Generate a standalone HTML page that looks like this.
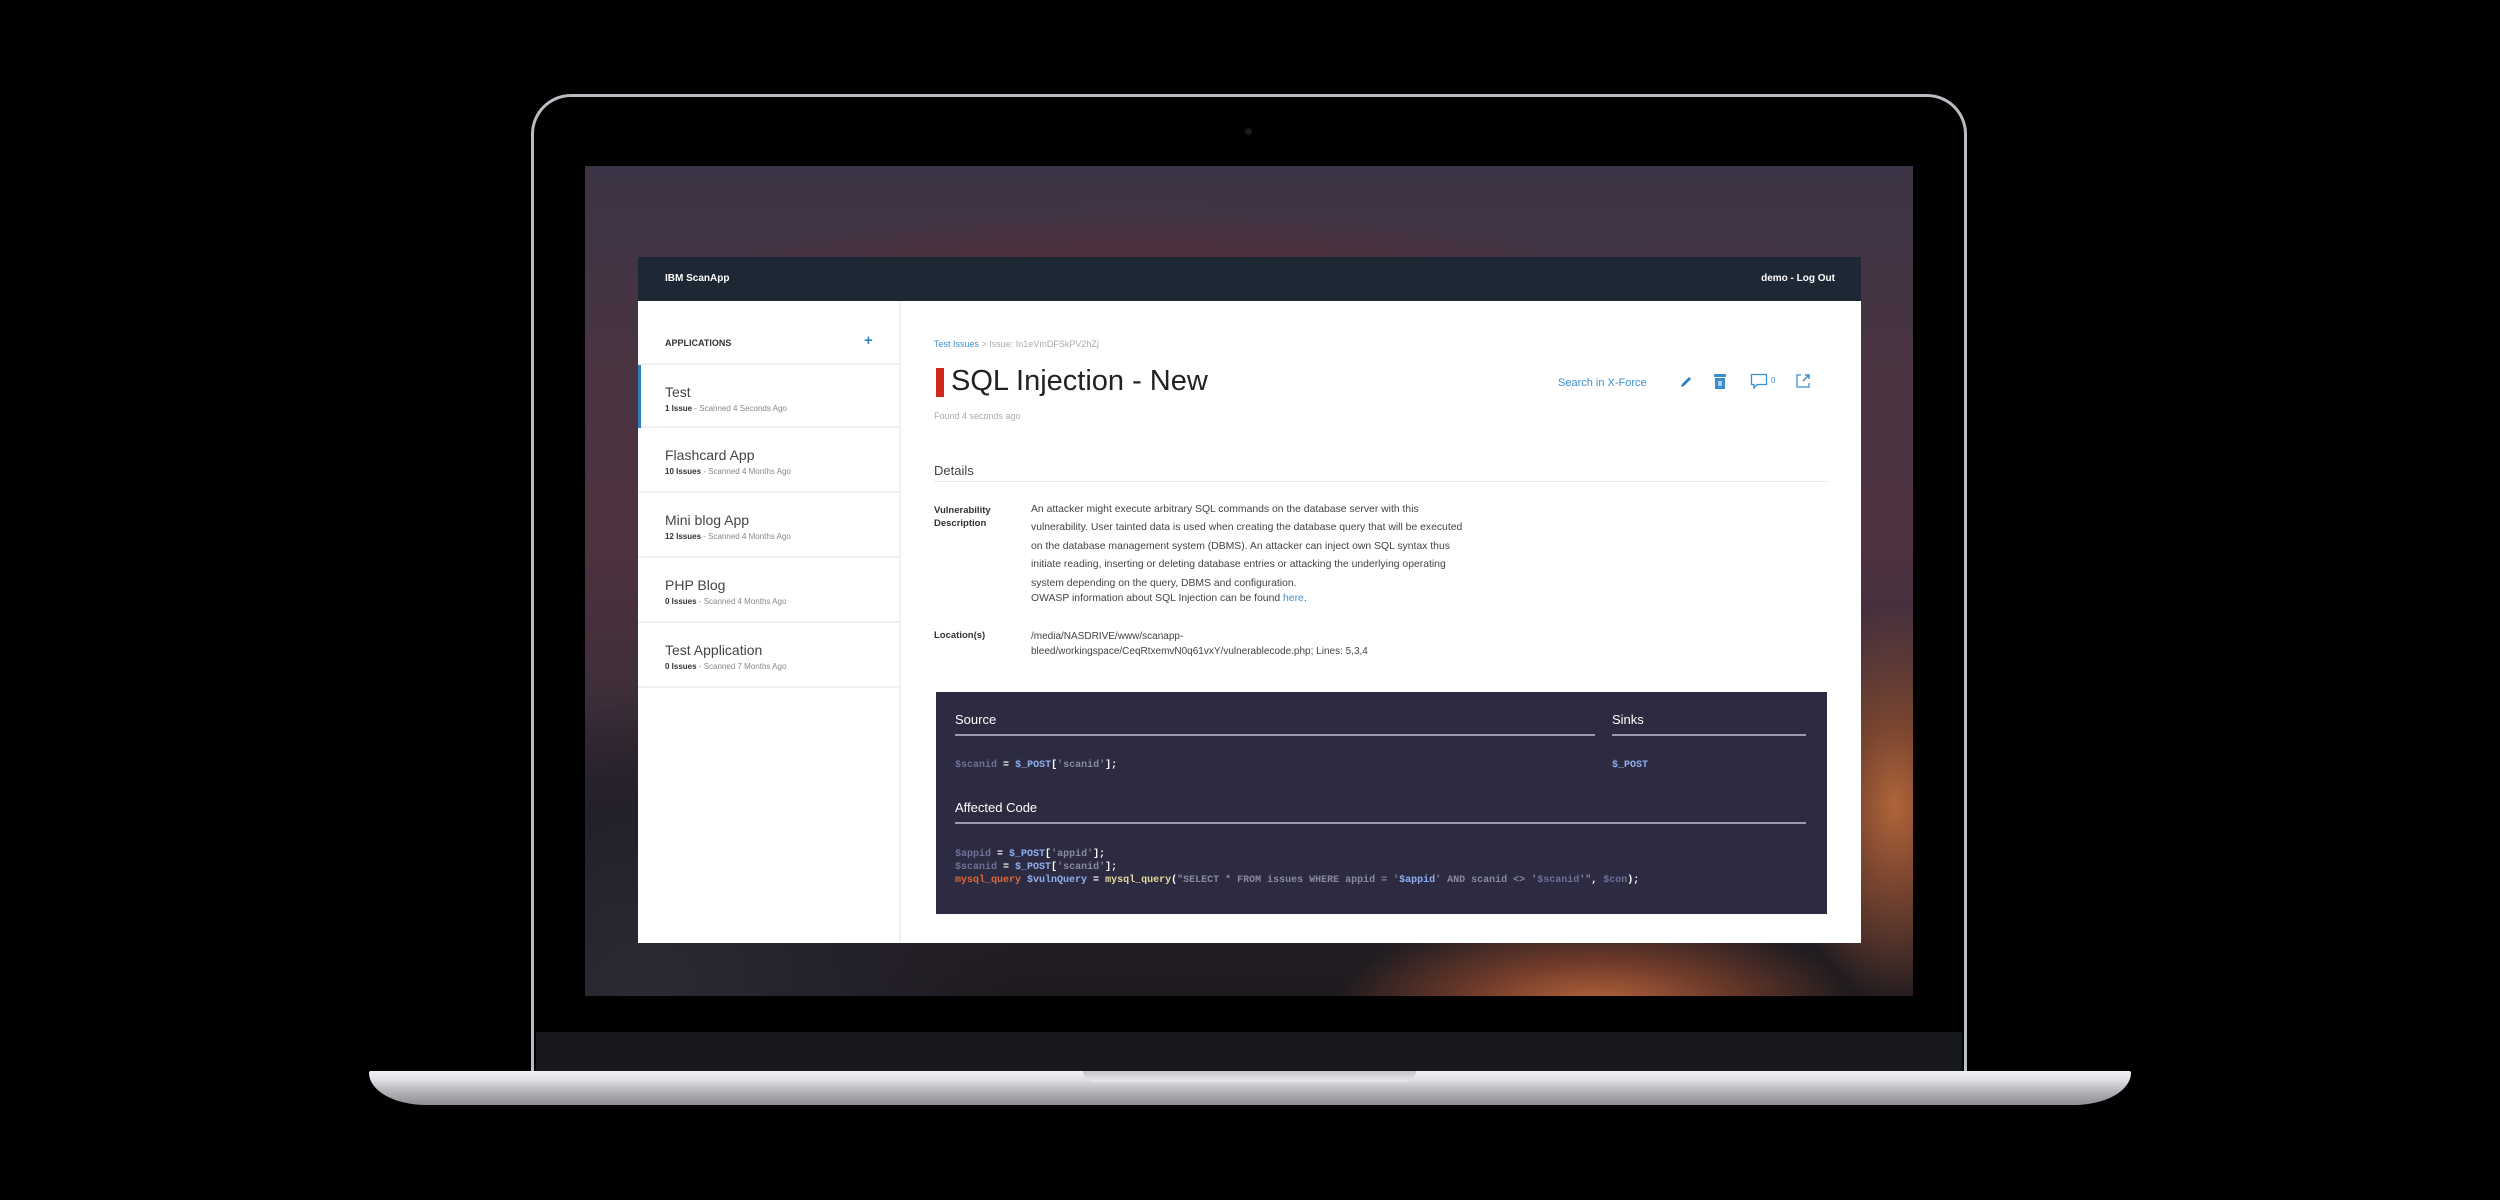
<!DOCTYPE html>
<html><head><meta charset="utf-8"><style>
*{margin:0;padding:0;box-sizing:border-box}
body{width:2500px;height:1200px;background:#000;position:relative;overflow:hidden;font-family:"Liberation Sans",sans-serif}
.abs{position:absolute}
#bezel{left:531px;top:94px;width:1436px;height:980px;border-radius:40px 40px 0 0;border:3px solid #b9bcc2;border-bottom:none;background:#000}
#chin{left:536px;top:1032px;width:1426px;height:39px;background:#17181b}
#screen{left:585px;top:166px;width:1328px;height:830px;overflow:hidden;
background:
radial-gradient(ellipse 110px 200px at 1310px 640px,#b0653a 0%,#7a4530 40%,rgba(60,40,50,0) 100%),
radial-gradient(ellipse 260px 90px at 1010px 840px,#b8653a 0%,#6e3a2a 50%,rgba(40,25,30,0) 100%),
radial-gradient(ellipse 360px 300px at 60px 820px,#2a2a35 0%,#24202a 60%,rgba(0,0,0,0) 100%),
radial-gradient(ellipse 520px 110px at 560px 150px,#7a3a40 0%,rgba(90,45,55,0.6) 50%,rgba(0,0,0,0) 100%),
linear-gradient(180deg,#3c3446 0%,#4a3442 25%,#4e3240 45%,#3e2e3a 65%,#2a2228 85%,#1e1a1e 100%)}
#base{left:369px;top:1071px;width:1762px;height:34px;border-radius:2px 2px 60px 60px/2px 2px 34px 34px;background:linear-gradient(180deg,#f2f3f5 0%,#dfe1e4 25%,#b9bbc0 55%,#8c8e93 100%)}
#notch{left:1083px;top:1071px;width:333px;height:11px;border-radius:0 0 12px 12px;background:linear-gradient(180deg,#c4c6ca,#e8e9eb)}
#cam{left:1245px;top:128px;width:7px;height:7px;border-radius:50%;background:#1a1a1e}
#app{left:638px;top:257px;width:1223px;height:686px;background:#fff}
#hdr{left:0;top:0;width:1223px;height:44px;background:#1e2834;color:#fff;font-size:10px;font-weight:bold}
#side{left:0;top:44px;width:263px;height:642px;border-right:2px solid #eef0f2}
.item{position:absolute;left:0;width:261px;height:65px;border-bottom:2px solid #f0f1f3}
.item .t{position:absolute;left:27px;top:19px;font-size:14px;color:#444}
.item .s{position:absolute;left:27px;top:39px;font-size:8px;color:#888}
.item .s b{color:#333}
.mono{font-family:"Liberation Mono",monospace;font-size:10px;font-weight:bold;white-space:pre}
</style></head><body>
<div id="bezel" class="abs"></div>
<div id="cam" class="abs"></div>
<div id="chin" class="abs"></div>
<div id="screen" class="abs"></div>
<div id="base" class="abs"></div>
<div id="notch" class="abs"></div>

<div id="app" class="abs">
 <div id="hdr" class="abs">
  <div class="abs" style="left:27px;top:16px">IBM ScanApp</div>
  <div class="abs" style="right:26px;top:16px">demo - Log Out</div>
 </div>
 <div id="side" class="abs">
  <div class="abs" style="left:27px;top:37px;font-size:9px;font-weight:bold;color:#333">APPLICATIONS</div>
  <div class="abs" style="left:226px;top:31px;font-size:15px;font-weight:bold;color:#2f86c7">+</div>
  <div class="item" style="top:62px;border-top:2px solid #f0f1f3"><div class="abs" style="left:0;top:0;width:3px;height:63px;background:#2f7fc4"></div><div class="t">Test</div><div class="s"><b>1 Issue</b> - Scanned 4 Seconds Ago</div></div>
  <div class="item" style="top:127px"><div class="t">Flashcard App</div><div class="s"><b>10 Issues</b> - Scanned 4 Months Ago</div></div>
  <div class="item" style="top:192px"><div class="t">Mini blog App</div><div class="s"><b>12 Issues</b> - Scanned 4 Months Ago</div></div>
  <div class="item" style="top:257px"><div class="t">PHP Blog</div><div class="s"><b>0 Issues</b> - Scanned 4 Months Ago</div></div>
  <div class="item" style="top:322px"><div class="t">Test Application</div><div class="s"><b>0 Issues</b> - Scanned 7 Months Ago</div></div>
 </div>
 <div class="abs" style="left:296px;top:82px;font-size:9px;color:#aaa"><span style="color:#3b8fd0">Test Issues</span> &gt; Issue: In1eVmDFSkPV2hZj</div>
 <div class="abs" style="left:298px;top:111px;width:8px;height:29px;background:#d0281e"></div>
 <div class="abs" style="left:313px;top:108px;font-size:29px;color:#222">SQL Injection - New</div>
 <div class="abs" style="left:296px;top:154px;font-size:9px;color:#aaa">Found 4 seconds ago</div>
 <div class="abs" style="left:920px;top:120px;font-size:11px;color:#3b8fd0">Search in X-Force</div>
 <svg class="abs" style="left:1040px;top:117px" width="16" height="16" viewBox="0 0 16 16"><path d="M3 13 L4 10 L11 3 L13 5 L6 12 Z" fill="#2f7fc4"/></svg>
 <svg class="abs" style="left:1075px;top:116px" width="14" height="17" viewBox="0 0 14 17"><rect x="1" y="1" width="12" height="3" fill="#3b8fd0"/><rect x="2" y="5" width="10" height="11" fill="#3b8fd0"/><rect x="5" y="8" width="4" height="5" fill="#a8cdef"/></svg>
 <svg class="abs" style="left:1112px;top:116px" width="30" height="17" viewBox="0 0 30 17"><path d="M1.5 1.5 H16.5 V11.5 H7 L4 15 V11.5 H1.5 Z" fill="none" stroke="#3b8fd0" stroke-width="1.3"/><text x="21" y="10" font-size="8" fill="#3b8fd0" font-family="Liberation Sans">0</text></svg>
 <svg class="abs" style="left:1157px;top:116px" width="16" height="16" viewBox="0 0 16 16"><path d="M6 2 H2 V14 H14 V10" fill="none" stroke="#3b8fd0" stroke-width="1.3"/><path d="M8 8 L14 2 M10 2 H14 V6" fill="none" stroke="#3b8fd0" stroke-width="1.5"/></svg>
 <div class="abs" style="left:296px;top:206px;font-size:13px;color:#444">Details</div>
 <div class="abs" style="left:296px;top:224px;width:893px;height:1px;background:#e6e7e9"></div>
 <div class="abs" style="left:296px;top:247px;font-size:9.5px;font-weight:bold;color:#333;line-height:13px">Vulnerability<br>Description</div>
 <div class="abs" style="left:393px;top:244px;width:500px;font-size:10.4px;color:#444;line-height:18.4px">An attacker might execute arbitrary SQL commands on the database server with this<br>vulnerability. User tainted data is used when creating the database query that will be executed<br>on the database management system (DBMS). An attacker can inject own SQL syntax thus<br>initiate reading, inserting or deleting database entries or attacking the underlying operating<br>system depending on the query, DBMS and configuration.</div>
 <div class="abs" style="left:393px;top:336px;font-size:10.4px;color:#444">OWASP information about SQL Injection can be found <span style="color:#3b8fd0">here</span>.</div>
 <div class="abs" style="left:296px;top:373px;font-size:9.5px;font-weight:bold;color:#333">Location(s)</div>
 <div class="abs" style="left:393px;top:372px;font-size:10px;color:#444;line-height:15px">/media/NASDRIVE/www/scanapp-<br>bleed/workingspace/CeqRtxemvN0q61vxY/vulnerablecode.php; Lines: 5,3,4</div>
 <div class="abs" style="left:298px;top:435px;width:891px;height:222px;background:#2c2b42">
  <div class="abs" style="left:19px;top:20px;font-size:13px;color:#fff">Source</div>
  <div class="abs" style="left:19px;top:42px;width:640px;height:2px;background:#9a99b0"></div>
  <div class="abs" style="left:676px;top:20px;font-size:13px;color:#fff">Sinks</div>
  <div class="abs" style="left:676px;top:42px;width:194px;height:2px;background:#9a99b0"></div>
  <div class="abs mono" style="left:19px;top:68px;color:#7e8bb8"><span style="color:#6f7296">$scanid</span> <span style="color:#fff">=</span> <span style="color:#8fb0f0">$_POST</span><span style="color:#fff">[</span><span style="color:#8a8a9a">'scanid'</span><span style="color:#fff">];</span></div>
  <div class="abs mono" style="left:676px;top:68px;color:#8fb0f0">$_POST</div>
  <div class="abs" style="left:19px;top:108px;font-size:13px;color:#fff">Affected Code</div>
  <div class="abs" style="left:19px;top:130px;width:851px;height:2px;background:#9a99b0"></div>
  <div class="abs mono" style="left:19px;top:156px;line-height:13px;color:#fff"><span style="color:#6f7296">$appid</span> = <span style="color:#8fb0f0">$_POST</span>[<span style="color:#8a8a9a">'appid'</span>];
<span style="color:#6f7296">$scanid</span> = <span style="color:#8fb0f0">$_POST</span>[<span style="color:#8a8a9a">'scanid'</span>];
<span style="color:#e0683a">mysql_query</span> <span style="color:#8fb0f0">$vulnQuery</span> = <span style="color:#e8d9a0">mysql_query</span>(<span style="color:#8a8a9a">"SELECT * FROM issues WHERE appid = '</span><span style="color:#8fb0f0">$appid</span><span style="color:#8a8a9a">' AND scanid &lt;&gt; '</span><span style="color:#6f7296">$scanid</span><span style="color:#8a8a9a">'"</span>, <span style="color:#6f7296">$con</span>);</div>
 </div>
</div>
</body></html>
